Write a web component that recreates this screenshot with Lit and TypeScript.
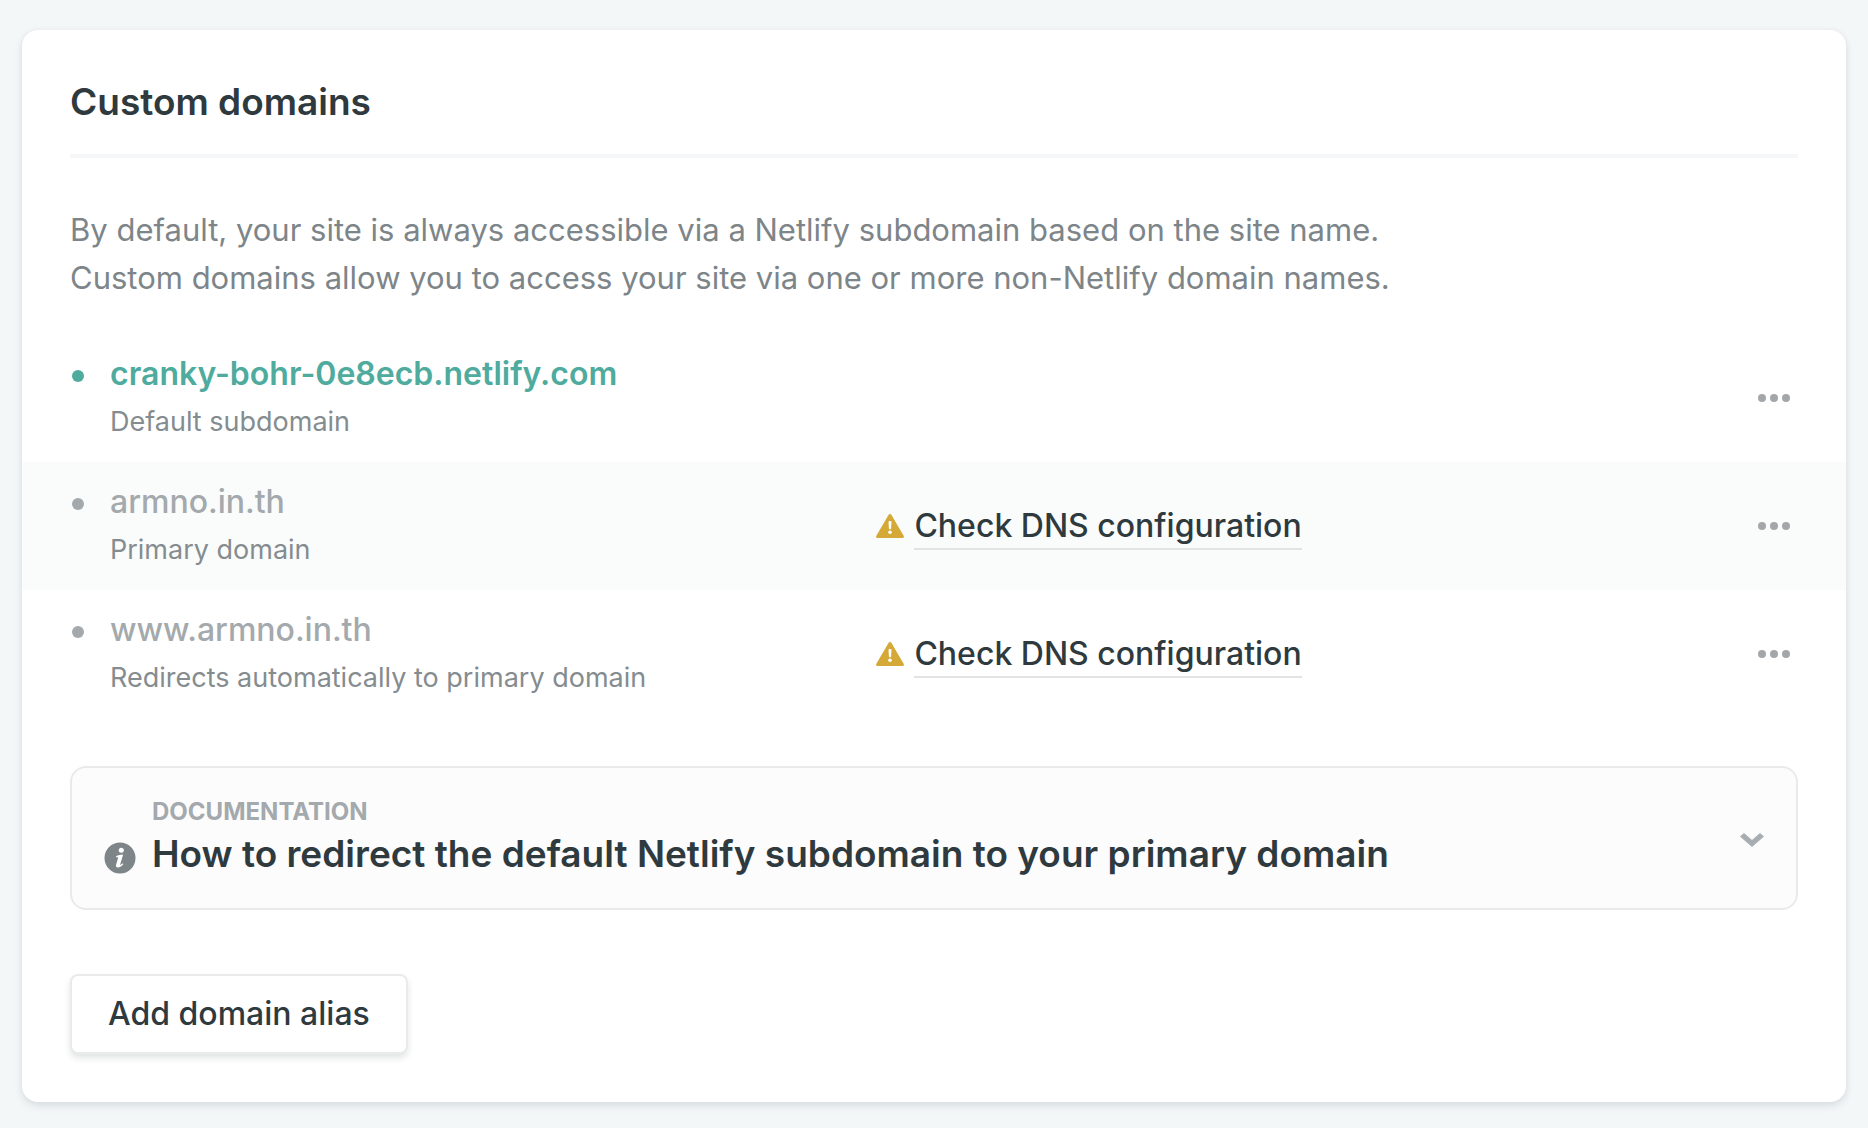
import { LitElement, html, css, svg, nothing } from "lit";
import { customElement, property, state } from "lit/decorators.js";
import { classMap } from "lit/directives/class-map.js";

interface Domain {
  name: string;
  note: string;
  active: boolean;
  needsDns: boolean;
}

const DOMAINS: Domain[] = [
  { name: "cranky-bohr-0e8ecb.netlify.com", note: "Default subdomain", active: true, needsDns: false },
  { name: "armno.in.th", note: "Primary domain", active: false, needsDns: true },
  { name: "www.armno.in.th", note: "Redirects automatically to primary domain", active: false, needsDns: true },
];

const warningIcon = html`<svg class="warning" viewBox="0 0 28 24" aria-hidden="true">
  ${svg`<path fill="#d4a937" d="M12.5.9a1.7 1.7 0 0 1 3 0l12.300 21.200a1.300 1.300 0 0 1-1.100 1.900H1.300a1.300 1.300 0 0 1-1.100-1.900z"/>
  <path fill="#fff" d="M12.500 8a1 1 0 0 1 1-1h1a1 1 0 0 1 1 1l-.4 6.300a1.100 1.100 0 0 1-2.200 0z"/>
  <circle cx="14" cy="18.200" r="1.800" fill="#fff"/>`}
</svg>`;

const infoIcon = html`<svg class="info" viewBox="0 0 32 32" aria-hidden="true">
  ${svg`<circle cx="16" cy="16" r="15.500" fill="#7d8589"/>
  <circle cx="17.300" cy="8.300" r="2.500" fill="#fff"/>
  <path fill="#fff" d="M12.200 14.100c2.100-.8 4.300-1.500 6.300-1.700l.5.500-2.700 9.200c-.2.800.1 1 .6.700.6-.4 1.200-.9 1.700-1.500l.8.8c-1.500 2-3.600 3.400-5.500 3.400-1.700 0-2.300-1.100-1.800-2.800l1.900-6.500c.2-.7 0-1-.6-1h-1.300z"/>`}
</svg>`;

const chevronIcon = html`<svg class="chevron" viewBox="0 0 24 14" aria-hidden="true">
  ${svg`<path fill="#a7adb1" d="M4 0 12 7 20 0 24 3.600 12 14 0 3.600z"/>`}
</svg>`;

const dotsIcon = html`<svg class="dots" viewBox="0 0 32 8" aria-hidden="true">
  ${svg`<circle cx="4" cy="4" r="4"/><circle cx="16" cy="4" r="4"/><circle cx="28" cy="4" r="4"/>`}
</svg>`;

@customElement("domain-row")
class DomainRow extends LitElement {
  @property({ attribute: false }) domain!: Domain;

  static styles = css`
    :host {
      display: grid;
      grid-template-columns: 7fr 8fr;
      align-items: center;
      padding: 16px 48px;
      font-size: 32px;
      line-height: 48px;
    }
    .identity {
      display: grid;
      grid-template-columns: 12px 1fr;
      column-gap: 26px;
      align-items: center;
      padding-left: 2px;
    }
    .bullet {
      width: 12px;
      height: 12px;
      margin-top: 4px;
      border-radius: 50%;
      background: #a3a9ac;
    }
    .name {
      justify-self: start;
      color: #a3a9ac;
      font-weight: 500;
      text-decoration: none;
    }
    .active .bullet {
      background: #4eab9e;
    }
    .active .name {
      color: #4eab9e;
      font-weight: 600;
    }
    .note {
      grid-column: 2;
      color: #858c8f;
      font-size: 27px;
    }
    .actions {
      display: flex;
      align-items: center;
      gap: 10px;
    }
    .warning {
      width: 28px;
      height: 24px;
    }
    .check {
      color: #2f3a3f;
      font-weight: 500;
      text-decoration: none;
      box-shadow: inset 0 -2px #e2e4e4;
    }
    .menu {
      display: flex;
      margin-left: auto;
      padding: 16px 8px;
      border: 0;
      background: none;
      cursor: pointer;
    }
    .dots {
      width: 32px;
      height: 8px;
      fill: #a3a7aa;
    }
  `;

  render() {
    const d = this.domain;
    return html`
      <div class=${classMap({ identity: true, active: d.active })}>
        <span class="bullet"></span>
        <a class="name" href="#">${d.name}</a>
        <span class="note">${d.note}</span>
      </div>
      <div class="actions">
        ${d.needsDns ? html`${warningIcon}<a class="check" href="#">Check DNS configuration</a>` : nothing}
        <button class="menu" type="button" aria-label="Options">${dotsIcon}</button>
      </div>
    `;
  }
}

@customElement("app-root")
class AppRoot extends LitElement {
  @state() private open = false;

  static styles = css`
    :host {
      display: block;
      box-sizing: border-box;
      min-height: 100vh;
      padding: 30px 22px 26px;
      background: #f3f7f8;
      color: #2f3a3f;
      font-family: Inter, "Liberation Sans", sans-serif;
      font-size: 32px;
      line-height: 48px;
    }
    .card {
      padding: 48px 0;
      border-radius: 16px;
      background: #fff;
      box-shadow: 0 4px 8px rgba(14, 30, 37, 0.1), 0 0 6px rgba(14, 30, 37, 0.04);
    }
    .head,
    .intro,
    .doc,
    .add {
      margin: 0 48px;
    }
    .head {
      padding-bottom: 28px;
      border-bottom: 4px solid #f5f7f8;
      font-size: 37px;
      font-weight: 600;
    }
    .intro {
      padding: 48px 0 32px;
      color: #7d8589;
      font-size: 31px;
    }
    .line {
      display: block;
    }
    .list {
      margin: 0;
      padding: 0;
      list-style: none;
    }
    .item:nth-child(even) {
      background: #fafcfb;
    }
    .doc {
      display: flex;
      align-items: center;
      box-sizing: border-box;
      width: calc(100% - 96px);
      margin-top: 48px;
      padding: 26px 32px 30px;
      border: 2px solid #e9ebeb;
      border-radius: 16px;
      background: #fcfcfc;
      color: inherit;
      font: inherit;
      text-align: left;
      cursor: pointer;
    }
    .text {
      display: grid;
      flex: 1;
      grid-template-columns: 32px 1fr;
      column-gap: 16px;
      align-items: center;
    }
    .kicker {
      grid-column: 2;
      color: #a3a9ac;
      font-size: 24px;
      font-weight: 700;
      line-height: 36px;
      text-transform: uppercase;
    }
    .info {
      width: 32px;
      height: 32px;
      margin-top: 8px;
    }
    .title {
      font-size: 37px;
      font-weight: 600;
    }
    .chevron {
      width: 24px;
      height: 14px;
      margin-top: 8px;
    }
    .add {
      display: block;
      margin-top: 64px;
      padding: 14px 36px;
      border: 2px solid #e9ebeb;
      border-radius: 8px;
      background: #fff;
      box-shadow: 0 4px 6px rgba(14, 30, 37, 0.12);
      color: inherit;
      font: inherit;
      font-weight: 500;
      cursor: pointer;
    }
  `;

  render() {
    return html`
      <section class="card" aria-labelledby="heading">
        <h2 class="head" id="heading">Custom domains</h2>
        <div class="intro">
          <span class="line">By default, your site is always accessible via a Netlify subdomain based on the site name.</span>
          <span class="line">Custom domains allow you to access your site via one or more non-Netlify domain names.</span>
        </div>
        <ul class="list">
          ${DOMAINS.map((d) => html`<li class="item"><domain-row .domain=${d}></domain-row></li>`)}
        </ul>
        <button class="doc" type="button" aria-expanded=${this.open ? "true" : "false"} @click=${() => (this.open = !this.open)}>
          <span class="text">
            <span class="kicker">Documentation</span>
            ${infoIcon}
            <span class="title">How to redirect the default Netlify subdomain to your primary domain</span>
          </span>
          ${chevronIcon}
        </button>
        <button class="add" type="button">Add domain alias</button>
      </section>
    `;
  }
}
